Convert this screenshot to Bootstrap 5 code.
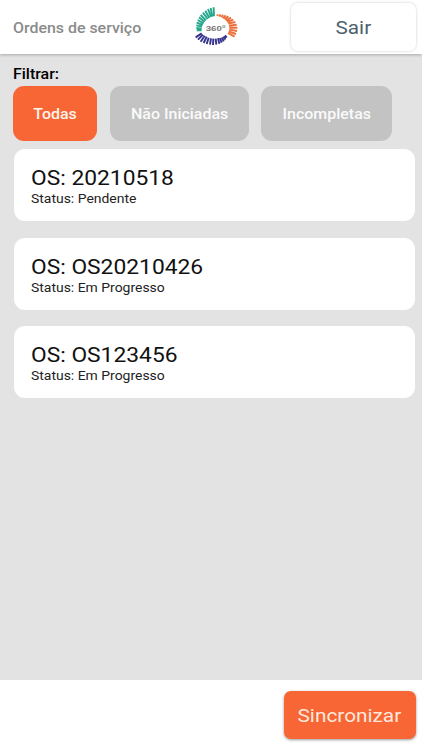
<!DOCTYPE html>
<html lang="pt-BR">
<head>
<meta charset="utf-8">
<meta name="viewport" content="width=device-width, initial-scale=1">
<title>Ordens de serviço</title>
<link href="https://cdn.jsdelivr.net/npm/bootstrap@5.3.0/dist/css/bootstrap.min.css" rel="stylesheet">
<style>
body{font-family:Roboto,"Liberation Sans",sans-serif;background:#e3e3e3;color:#111;height:750px}
/* Wide lettering used across the app */
.wide{display:inline-block;white-space:nowrap;transform:scaleX(1.14)}
.wide-start{transform-origin:left center}
.topbar{height:54px;box-shadow:0 1px 3px rgba(0,0,0,.25);padding:2px 6px 2px 13px}
.screen-title{font-size:14.5px;font-weight:500;color:#8b8b8b;width:172px;line-height:20px;padding-top:3px}
.screen-title .wide{transform:scaleX(1.098)}
.exit-btn{width:125px;height:48px;margin-left:46px;border-radius:7px;box-shadow:0 0 3px rgba(0,0,0,.2);color:#4c626e;font-size:19px}
.exit-btn .wide{padding-top:3px;transform:scaleX(1.09)}
.filter-label{font-size:14px;font-weight:500;line-height:18px;color:#000;padding:11px 13px 0;margin-bottom:3px}
.filters{gap:12.5px;padding-left:12.7px}
.chip{height:55px;border-radius:11px;background:#c3c3c3;color:#fafafa;font-size:14px;font-weight:500;padding:2px 0 0}
.chip.chip-on{background:#f76634;color:#fff3ec}
.order{height:72px;border-radius:11px;padding:17px 17px 0}
.order h2{font-size:20px;font-weight:400;line-height:24px;margin:0;color:#111}
.order p{font-size:12.5px;line-height:17px;margin:0;color:#222}
.order p .wide{transform:scaleX(1.115)}
.orders{gap:16.3px;padding:8.4px 7.5px 0 13.5px}
.bottombar{height:70px;padding:0 6.5px 0 0}
.sync-btn{width:131.5px;height:48px;border-radius:7px;background:#f76634;color:#ffe9de;font-size:19px;box-shadow:0 1px 3px rgba(0,0,0,.4)}
.sync-btn .wide{padding-top:2px;transform:scaleX(1.095)}
.w-a{width:84.6px}.w-b{width:138.8px}.w-c{width:130.8px}
</style>
<script src="https://cdn.jsdelivr.net/npm/bootstrap@5.3.0/dist/js/bootstrap.bundle.min.js"></script>
</head>
<body class="d-flex flex-column overflow-hidden">
<header class="topbar bg-white d-flex align-items-center flex-shrink-0">
  <div class="screen-title"><span class="wide wide-start">Ordens de serviço</span></div>
  <svg width="60" height="56" viewBox="0 0 180 168" class="flex-shrink-0" role="img" aria-label="360°">
    <g fill="none" stroke-width="5.8">
      <path stroke="#25a88d" d="M35 94H50M34 87L50 89M34 79L51 83M35 71L53 78M38 63L56 73M42 55L59 68M47 48L63 64M54 41L68 60M61 35L73 57M69 30L78 54M77 27L82 53M86 25L87 52"/>
      <path stroke="#ec6d38" d="M97 51L98 46M103 53L106 46M109 55L114 47M114 58L122 49M119 61L130 52M123 65L138 56M127 69L145 62M130 74L151 69M132 80L155 77M133 86H157M133 92L156 96M131 97L153 105M129 102L149 113"/>
      <path stroke="#35318d" d="M50 103L32 115M54 107L39 122M59 110L47 128M65 113L56 132M71 116L65 135M78 118L75 137M85 119L84 138M92 119L94 137M99 118L103 134M105 117L110 131M111 115L116 127M116 112L121 122M120 109L125 116"/>
    </g>
    <text x="62" y="95" font-family="Liberation Sans, sans-serif" font-weight="700" font-size="23.5" textLength="60" lengthAdjust="spacingAndGlyphs" fill="#777">360°</text>
  </svg>
  <button class="exit-btn btn bg-white border-0 p-0"><span class="wide">Sair</span></button>
</header>
<main class="flex-grow-1">
  <div class="filter-label"><span class="wide wide-start">Filtrar:</span></div>
  <div class="d-flex filters">
    <button class="chip chip-on btn border-0 w-a"><span class="wide">Todas</span></button>
    <button class="chip btn border-0 w-b"><span class="wide">Não Iniciadas</span></button>
    <button class="chip btn border-0 w-c"><span class="wide">Incompletas</span></button>
  </div>
  <div class="orders d-flex flex-column">
    <section class="order bg-white"><h2><span class="wide wide-start">OS: 20210518</span></h2><p><span class="wide wide-start">Status: Pendente</span></p></section>
    <section class="order bg-white"><h2><span class="wide wide-start">OS: OS20210426</span></h2><p><span class="wide wide-start">Status: Em Progresso</span></p></section>
    <section class="order bg-white"><h2><span class="wide wide-start">OS: OS123456</span></h2><p><span class="wide wide-start">Status: Em Progresso</span></p></section>
  </div>
</main>
<footer class="bottombar bg-white d-flex align-items-center justify-content-end flex-shrink-0">
  <button class="sync-btn btn border-0 p-0"><span class="wide">Sincronizar</span></button>
</footer>
</body>
</html>
